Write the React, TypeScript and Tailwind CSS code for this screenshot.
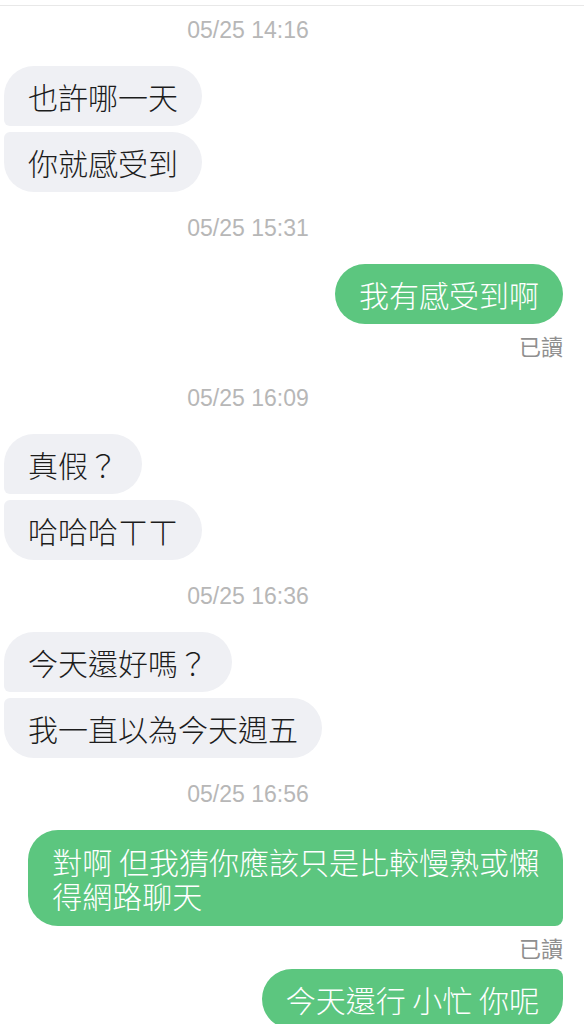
import React from 'react'

type Item =
  | { kind: 'time'; text: string }
  | { kind: 'in'; lines: string[] }
  | { kind: 'out'; lines: string[][]; read?: boolean }

const CJK = "font-['Noto_Sans_CJK_TC','Noto_Sans',sans-serif]"

const CHAT: Item[] = [
  { kind: 'time', text: '05/25 14:16' },
  { kind: 'in', lines: ['也許哪一天', '你就感受到'] },
  { kind: 'time', text: '05/25 15:31' },
  { kind: 'out', lines: [['我有感受到啊']], read: true },
  { kind: 'time', text: '05/25 16:09' },
  { kind: 'in', lines: ['真假？', '哈哈哈ㄒㄒ'] },
  { kind: 'time', text: '05/25 16:36' },
  { kind: 'in', lines: ['今天還好嗎？', '我一直以為今天週五'] },
  { kind: 'time', text: '05/25 16:56' },
  { kind: 'out', lines: [['對啊 但我猜你應該只是比較慢熟或懶', '得網路聊天']], read: true },
  { kind: 'out', lines: [['今天還行 小忙 你呢']] },
]

function TimeStamp({ text, afterRead }: { text: string; afterRead: boolean }) {
  return (
    <div
      className={`w-[496px] mb-6 text-center text-[23px] leading-6 text-[#b7b7b7] font-['Liberation_Sans',Arial,sans-serif] ${
        afterRead ? 'mt-[19px]' : 'mt-6'
      }`}
    >
      {text}
    </div>
  )
}

function IncomingGroup({ lines }: { lines: string[] }) {
  return (
    <div className="flex flex-col items-start gap-[6px] pl-1">
      {lines.map((line, i) => (
        <div
          key={line}
          className={`bg-[#eff0f4] text-[#1c1c1c] text-[30px] font-light leading-[34px] px-6 py-[13px] rounded-[30px] ${CJK} ${
            i === 0 ? 'rounded-bl-[6px]' : 'rounded-tl-[6px]'
          }`}
        >
          {line}
        </div>
      ))}
    </div>
  )
}

function OutgoingBubble({ rows, read, first }: { rows: string[]; read?: boolean; first: boolean }) {
  return (
    <div className="flex flex-col items-end pr-[21px]">
      <div
        className={`bg-[#5cc67f] text-white text-[30px] font-light leading-[34px] px-6 rounded-[30px] ${CJK} ${
          rows.length > 1 ? 'rounded-br-[8px] py-[14px]' : 'py-[13px]'
        } ${!first ? 'rounded-tr-[8px]' : ''}`}
      >
        {rows.map((r, i) => (
          <div key={i}>{r}</div>
        ))}
      </div>
      {read && (
        <div className={`mt-[9px] mb-[10px] text-[22px] leading-6 text-[#8f8f8f] ${CJK}`}>已讀</div>
      )}
    </div>
  )
}

export default function App() {
  return (
    <div className="w-[584px] h-[1024px] overflow-hidden bg-white">
      <div className="h-[5px]" />
      <div className="border-t border-[#e8e8e8]" />
      <div className="flex flex-col -mt-[12px]">
        {CHAT.map((item, idx) => {
          const prev = CHAT[idx - 1]
          if (item.kind === 'time')
            return <TimeStamp key={idx} text={item.text} afterRead={!!prev && prev.kind === 'out' && !!prev.read} />
          if (item.kind === 'in') return <IncomingGroup key={idx} lines={item.lines} />
          return (
            <OutgoingBubble
              key={idx}
              rows={item.lines[0]}
              read={item.read}
              first={!(prev && prev.kind === 'out')}
            />
          )
        })}
      </div>
    </div>
  )
}
